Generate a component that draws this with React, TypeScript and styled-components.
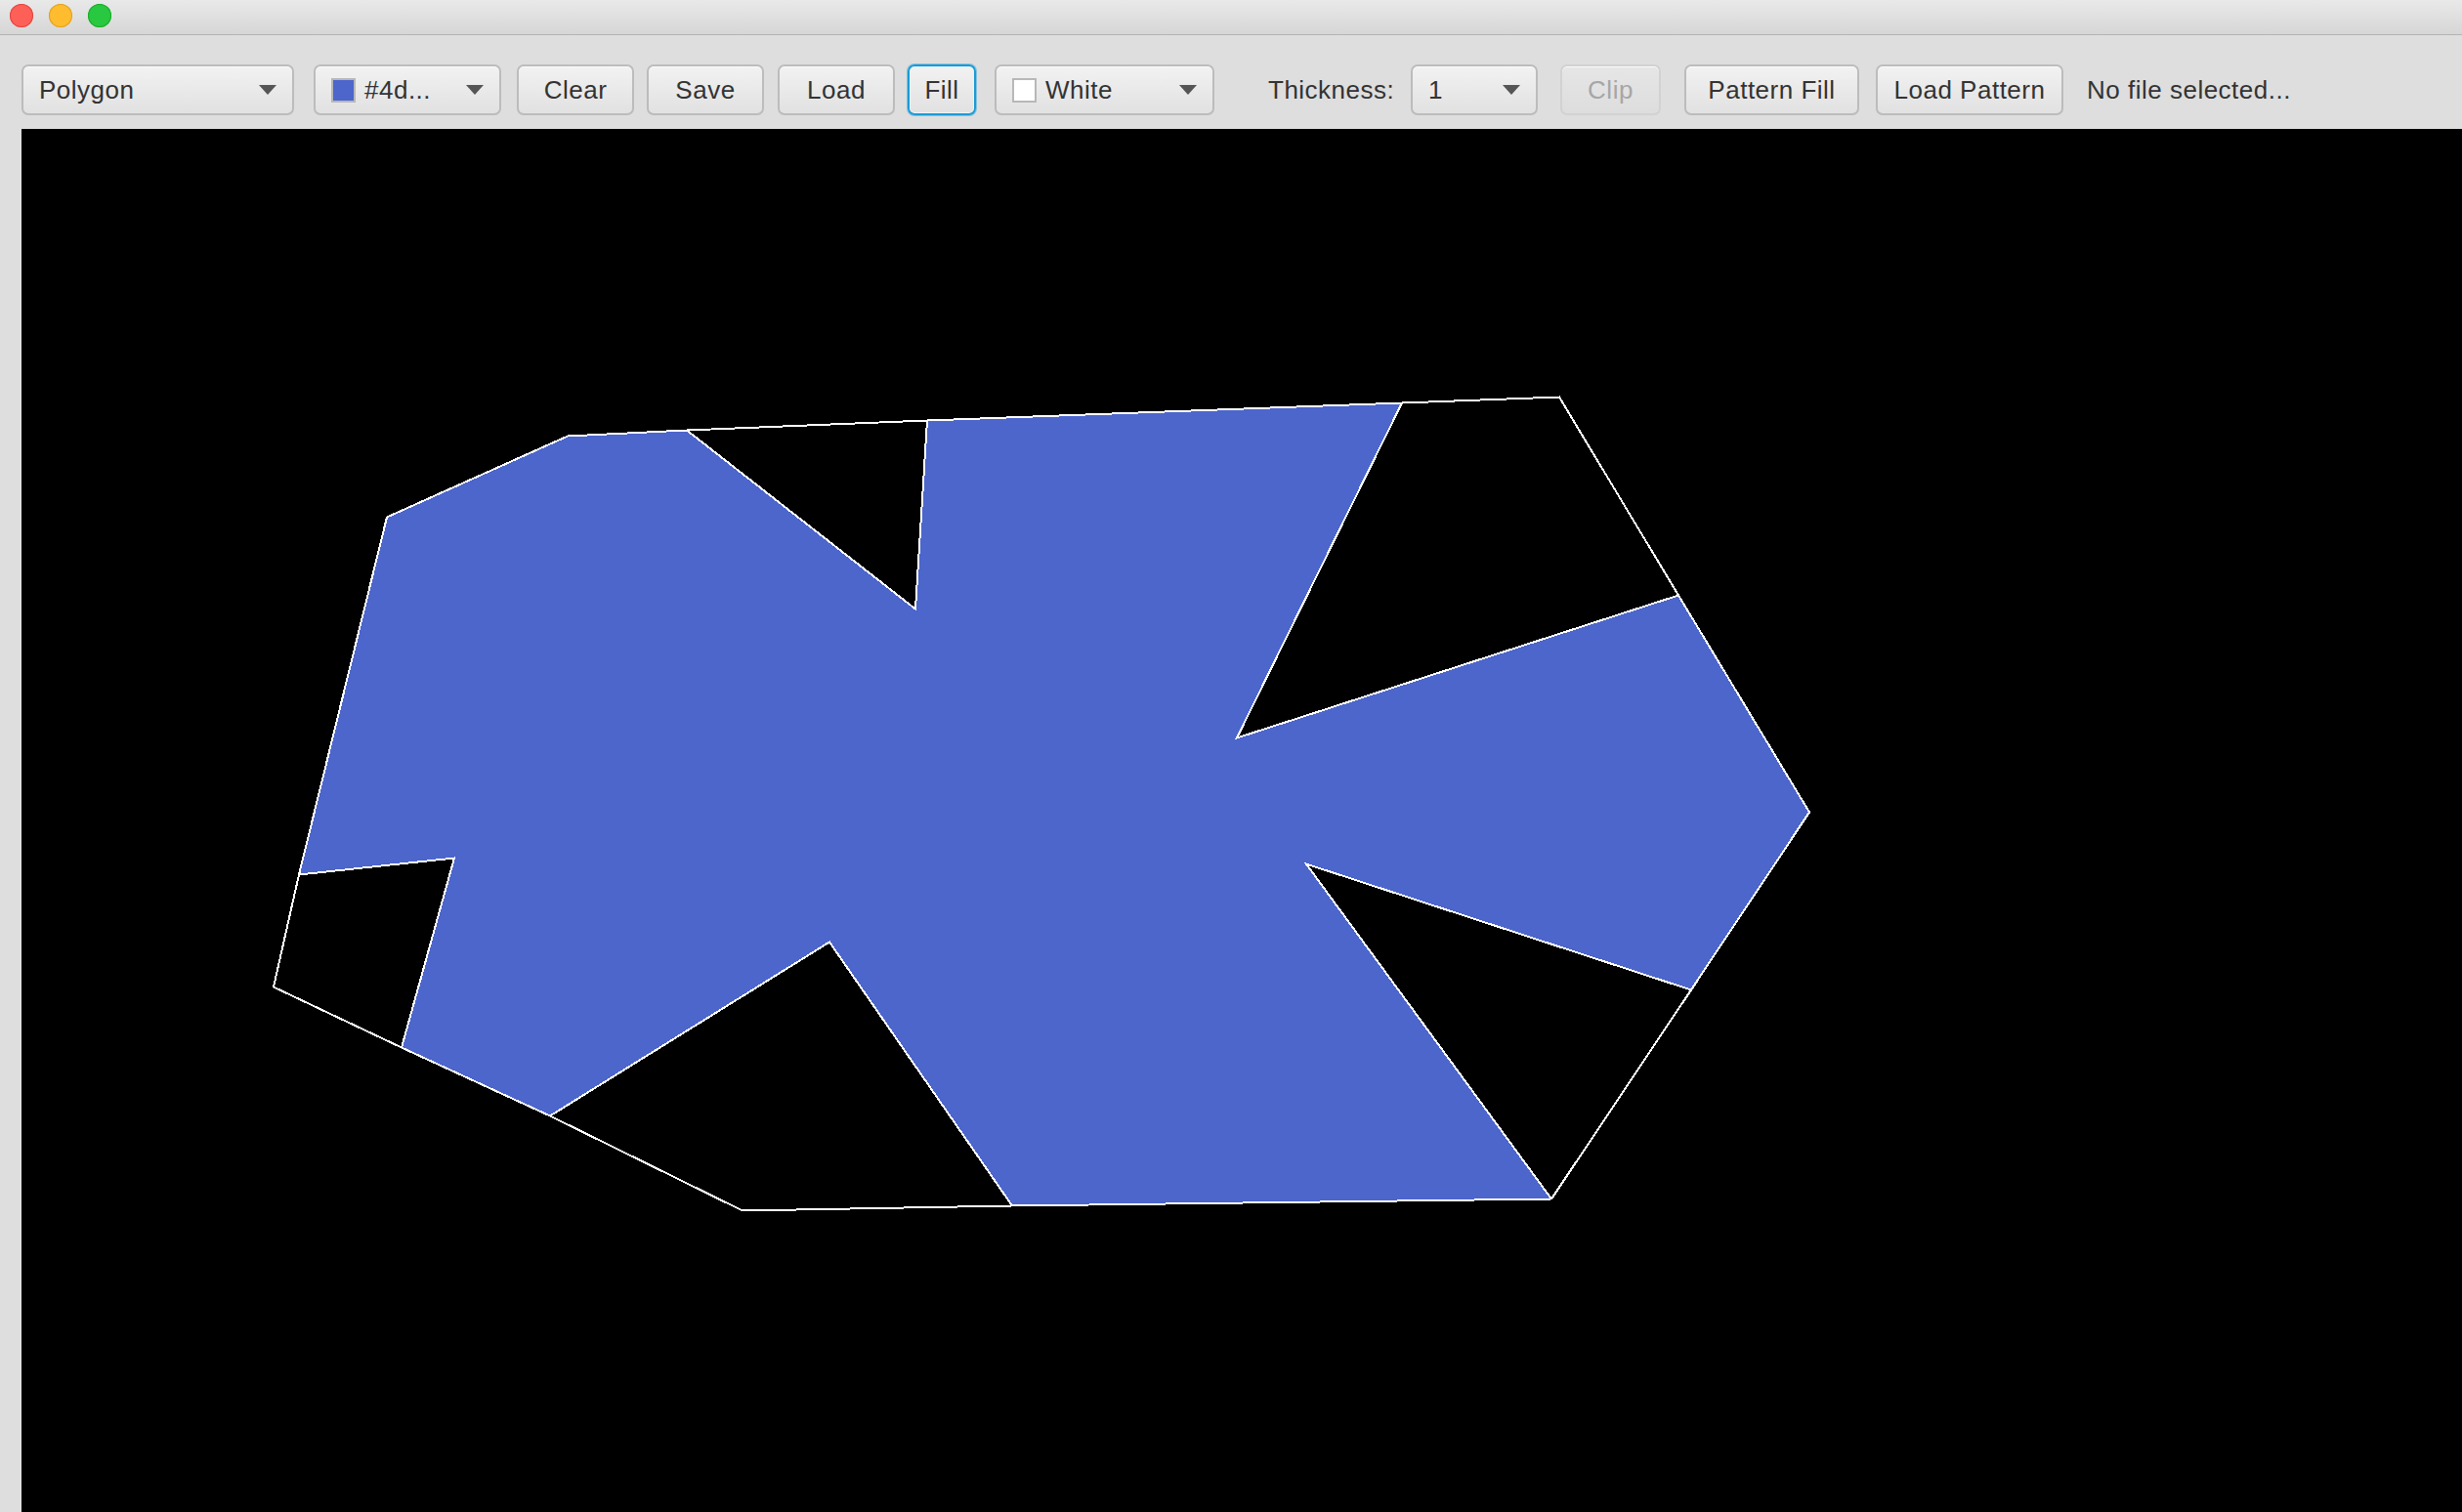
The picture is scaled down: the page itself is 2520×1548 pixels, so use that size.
import styled, { createGlobalStyle } from 'styled-components';

const GlobalStyle = createGlobalStyle`
  html, body {
    margin: 0;
    padding: 0;
    overflow: hidden;
    background: #dedede;
  }
  #root {
    width: 2520px;
    height: 1548px;
  }
`;

// outline that wraps the filled shape, in page coordinates
const hull = [
  [396, 530], [581, 447], [703, 441], [949, 431], [1435, 413], [1596, 407],
  [1718, 610], [1852, 832], [1731, 1014], [1588, 1228], [1036, 1235], [760, 1240],
  [563, 1143], [411, 1073], [280, 1011], [306, 896],
];

const shape = [
  [396, 530], [581, 447], [703, 441], [937, 624], [949, 431], [1435, 413],
  [1266, 756], [1718, 610], [1852, 832], [1731, 1014], [1337, 885], [1588, 1228],
  [1036, 1235], [849, 965], [563, 1143], [411, 1073], [465, 879], [306, 896],
];

const toPoints = (pts: number[][]) => pts.map((p) => p.join(',')).join(' ');

const Arrow = () => (
  <ArrowIcon viewBox="0 0 18 10">
    <path d="M0 0 L18 0 L9 10 Z" fill="#555" />
  </ArrowIcon>
);

const App = () => {
  return (
    <>
      <GlobalStyle />
      <Window>
        <TitleBar>
          <Light $color="#fe5f57" $edge="#e2463f" />
          <Light $color="#febc2e" $edge="#dea123" />
          <Light $color="#28c840" $edge="#1aab29" />
        </TitleBar>
        <Toolbar>
          <Combo $w={279}>
            <ComboText>Polygon</ComboText>
            <Arrow />
          </Combo>
          <Combo $w={192} $ml={20}>
            <Swatch $color="#4d66cc" />
            <ComboText>#4d...</ComboText>
            <Arrow />
          </Combo>
          <Button $w={120} $ml={16}>Clear</Button>
          <Button $w={120} $ml={13}>Save</Button>
          <Button $w={120} $ml={14}>Load</Button>
          <Button $w={70} $ml={13} $focused>Fill</Button>
          <Combo $w={225} $ml={19}>
            <Swatch $color="#ffffff" />
            <ComboText>White</ComboText>
            <Arrow />
          </Combo>
          <Label $ml={55} $w={131}>Thickness:</Label>
          <Combo $w={130} $ml={15}>
            <ComboText>1</ComboText>
            <Arrow />
          </Combo>
          <Button $w={103} $ml={23} disabled>Clip</Button>
          <Button $w={179} $ml={24}>Pattern Fill</Button>
          <Button $w={192} $ml={17}>Load Pattern</Button>
          <Label $ml={24}>No file selected...</Label>
        </Toolbar>
        <Main>
          <Canvas>
            <svg width="100%" height="100%" viewBox="22 133 2498 1415" shapeRendering="crispEdges">
              <polygon points={toPoints(hull)} fill="none" stroke="#ffffff" strokeWidth={2} />
              <polygon points={toPoints(shape)} fill="#4d66cc" stroke="#ffffff" strokeWidth={2} />
            </svg>
          </Canvas>
        </Main>
      </Window>
    </>
  );
};

const Window = styled.div`
  width: 2520px;
  height: 1548px;
  display: flex;
  flex-direction: column;

  font-family: 'Liberation Sans', Arial, sans-serif;
  background: #dedede;
`;

const TitleBar = styled.div`
  height: 36px;
  flex: none;
  display: flex;
  align-items: flex-start;
  gap: 16px;

  padding: 4px 0 0 10px;
  box-sizing: border-box;

  background: linear-gradient(#e9e9e9, #d6d6d6);
  border-bottom: 1px solid #b3b3b3;
`;

const Light = styled.span<{ $color: string; $edge: string }>`
  width: 24px;
  height: 24px;
  border-radius: 50%;

  background: ${(p) => p.$color};
  box-shadow: inset 0 0 0 1px ${(p) => p.$edge};
`;

const Toolbar = styled.div`
  height: 96px;
  flex: none;
  display: flex;
  align-items: flex-start;

  padding: 30px 0 0 22px;
  box-sizing: border-box;

  background: #dedede;
`;

const Control = styled.div<{ $w?: number; $ml?: number }>`
  width: ${(p) => (p.$w ? `${p.$w}px` : 'auto')};
  height: 52px;
  flex: none;
  margin-left: ${(p) => p.$ml ?? 0}px;

  box-sizing: border-box;
  border: 2px solid #bcbcbc;
  border-radius: 7px;
  background: linear-gradient(#f2f2f2, #e1e1e1);
  box-shadow: inset 0 1px 0 #fbfbfb;

  font-size: 26px;
  letter-spacing: 0.5px;
  color: #333333;
`;

const Combo = styled(Control)`
  display: flex;
  align-items: center;
  padding: 0 16px 0 16px;
`;

const ComboText = styled.span`
  flex: 1;
  white-space: nowrap;
`;

const Swatch = styled.span<{ $color: string }>`
  width: 25px;
  height: 25px;
  flex: none;
  margin-right: 9px;

  box-sizing: border-box;
  border: 2px solid #b8b8b8;
  background: ${(p) => p.$color};
`;

const ArrowIcon = styled.svg`
  width: 18px;
  height: 10px;
  flex: none;
`;

const Button = styled(Control).attrs({ as: 'button' })<{ $focused?: boolean }>`
  display: flex;
  align-items: center;
  justify-content: center;
  padding: 0;

  font-family: inherit;
  white-space: nowrap;

  ${(p) =>
    p.$focused &&
    `
    border-color: #1b9bd6;
    box-shadow: 0 0 0 1px rgba(27, 155, 214, 0.45), inset 0 0 0 1px #e8f4fa;
  `}

  &:disabled {
    color: #a6a6a6;
    border-color: #d2d2d2;
    background: linear-gradient(#e6e6e6, #dddddd);
  }
`;

const Label = styled.span<{ $ml?: number; $w?: number }>`
  width: ${(p) => (p.$w ? `${p.$w}px` : 'auto')};
  height: 52px;
  flex: none;
  margin-left: ${(p) => p.$ml ?? 0}px;

  display: flex;
  align-items: center;

  font-size: 26px;
  letter-spacing: 0.5px;
  color: #333333;
  white-space: nowrap;
`;

const Main = styled.div`
  flex: 1;
  min-height: 0;
  display: flex;
  padding-left: 22px;
  background: #dedede;
`;

const Canvas = styled.div`
  flex: 1;
  background: #000000;
  overflow: hidden;
`;

export default App;
